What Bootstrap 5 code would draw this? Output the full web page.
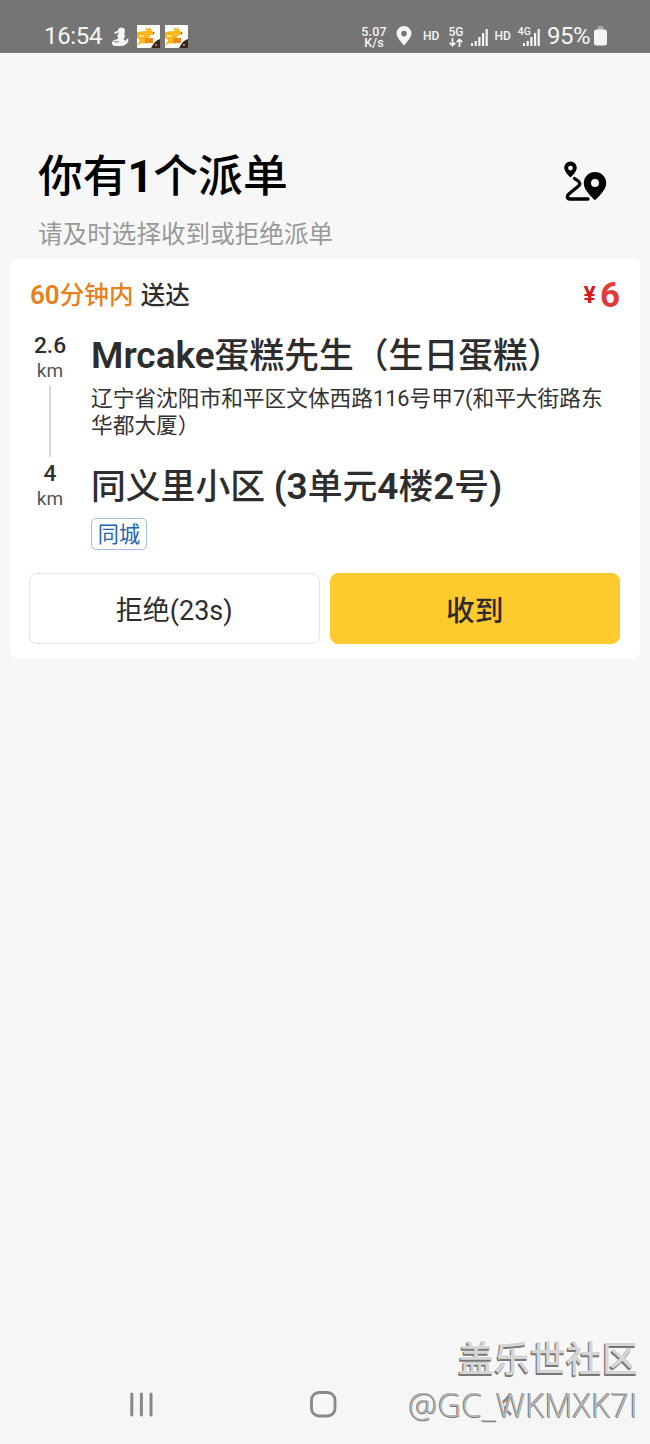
<!DOCTYPE html>
<html lang="zh-CN">
<head>
<meta charset="utf-8">
<meta name="viewport" content="width=device-width, initial-scale=1">
<title>派单</title>
<link href="https://cdn.jsdelivr.net/npm/bootstrap@5.3.0/dist/css/bootstrap.min.css" rel="stylesheet">
<style>
  body { background: #f7f7f7; color: #2d2d2d; font-family: Roboto, "Noto Sans CJK SC", sans-serif; overflow: hidden; }
  .screen { width: 650px; height: 1444px; }
  .status { height: 53px; background: #757575; color: #f5f5f5; padding: 20px 43px 0 44px; line-height: 32px; }
  .clock { font-size: 24px; letter-spacing: -.35px; width: 67px; }
  .speed { font-size: 12.5px; line-height: 11px; font-weight: 500; width: 26px; margin-top: 6px; white-space: pre-line; letter-spacing: .2px; }
  .tiny { font-size: 12px; font-weight: 500; }
  .pct { font-size: 24px; letter-spacing: -.5px; }
  .status svg { display: block; flex: none; }
  .heading { padding: 96px 43px 0 38px; height: 206px; }
  .title { font-size: 44.8px; line-height: 56px; font-weight: 500; color: #000; margin: 0; }
  .title b { font-weight: 700; }
  .hint { font-size: 24.6px; line-height: 30px; color: #999; margin: 15px 0 0; }
  .order { margin: 0 10px; height: 400px; border: 0; border-radius: 8px; padding: 18px 20px 15px; --bs-card-color: #2d2d2d; --bs-card-bg: #fff; }
  .eta { font-size: 24.6px; line-height: 34px; font-weight: 500; padding-top: 2px; height: 34px; }
  .eta span { color: #e8801c; margin-right: 1px; }
  .eta b { font-size: 26px; font-weight: 600; line-height: 1; }
  .yen { font-size: 23px; color: #d9171b; font-weight: 700; }
  .sum { font-size: 35px; color: #e13c3c; font-weight: 700; }
  .track { width: 42px; flex: none; margin-right: 20px; }
  .dist { font-size: 22.800px; line-height: 26px; font-weight: 500; }
  .unit { font-size: 19px; line-height: 24px; color: #555; }
  .rail { width: 2px; height: 71px; background: #d8d8d8; margin: 3px 0 4px; }
  .place { font-size: 34.800px; line-height: 46px; height: 46px; font-weight: 500; white-space: nowrap; margin: 0; }
  .place b { font-size: 37px; font-weight: 600; line-height: 1; }
  .addr { font-size: 21.700px; line-height: 26.500px; color: #333; white-space: nowrap; }
  .tagbox { font-size: 21.200px; line-height: 32px; width: 56px; height: 32px; border: 1.500px solid #a5bde0; border-radius: 5px; color: #2563b8; text-align: center; }
  .act { height: 71px; border-radius: 8px; font-size: 27px; line-height: 1; --bs-btn-color: #2d2d2d; padding: 5px 0 0; }
  .act-no { --bs-btn-border-color: #e5e5e5; --bs-btn-bg: #fff; }
  .act-yes { --bs-btn-bg: #ffca2e; --bs-btn-border-color: #ffca2e; font-size: 28.700px; font-weight: 500; }
  .navkeys { height: 73px; background: #f6f6f6; border-top: 1px solid #f3f3f3; }
  .navkeys svg { display: block; }
  .stamp { right: 12px; bottom: 14px; text-align: right; white-space: nowrap; color: #d6d6d6; text-shadow: 1px 1px 0 #777, -1px -1px 0 #fff; }
  .stamp-top { font: 500 36px/44px "Noto Sans CJK SC", sans-serif; margin-bottom: 2px; text-shadow: -1px 1px 0 #777, -1px 2px 0 #777, 1px -1px 0 #fff; }
  .stamp-user { font: 300 32.500px/50px "Open Sans", sans-serif; letter-spacing: .4px; color: #bbb; text-shadow: -1px 0 0 #777, 0 1px 0 #777, 1px -1px 0 #fff; }
</style>
</head>
<body>
<div class="screen position-relative d-flex flex-column">
  <header class="status d-flex align-items-start">
    <span class="clock">16:54</span>
    <svg width="19" height="22" viewBox="0 0 19 22" style="margin-top:6px" fill="#f5f5f5"><circle cx="10.500" cy="5" r="3.400"/><path d="M7.500 6.500 4 8 3 6.500 8 4zM8 7h5q2 3-.5 6l2 2 1.500-2.500 1.800 1.200-1.800 3.800q-3 3-8 2.500-7 .500-7-2.500 0-3.500 4-4 3-1 2-2.500L6 10z"/><path d="M3 15.500q4 1 5 0" fill="none" stroke="#757575"/></svg>
    <svg width="52" height="23" viewBox="0 0 52 23" style="margin:5px 0 0 7px">
      <defs><g id="roo"><path fill="#fff" d="M0 0h23v23H0z"/><path fill="#f9b81c" d="M0 7q6-1 10-1L8 2l4 2 1-2 2 4 2 1v2.500l-4 1-2 3v5H3l-2 2H0l3-5-3-3z"/><path fill="#fff" d="M2 10.500h5v1H2zM0 14l3 1-3 3z"/><path fill="#555" d="m16 7 2 1-2 1z"/><path fill="#f48a19" d="M8 13h8v5H8z"/><path fill="#3a251d" d="M14 23q4-8 9-9v9z"/><path fill="#a77" d="M18 19h2v2h-2z"/></g></defs>
      <use href="#roo"/><use href="#roo" x="28"/>
    </svg>
    <div class="speed text-center ms-auto">5.07
K/s</div>
    <svg width="16" height="20" viewBox="0 0 16 20" style="margin:6px 0 0 9px"><path fill="#f5f5f5" fill-rule="evenodd" d="M8 0a7.500 7.500 0 0 0-7.500 7.600C.5 12 8 19.500 8 19.500S15.500 12 15.500 7.600A7.500 7.500 0 0 0 8 0zm0 4.800a2.800 2.800 0 1 1 0 5.600 2.800 2.800 0 0 1 0-5.600z"/></svg>
    <span class="tiny" style="margin-left:11px">HD</span>
    <div class="tiny text-center" style="margin:6px 0 0 9px;line-height:12px"><div>5G</div>
      <svg class="mx-auto" width="14" height="9" viewBox="0 0 14 9" fill="none" stroke="#f5f5f5" stroke-width="1.700"><path d="M3.500 0v7.500M.7 4.800l2.800 2.800 2.800-2.800M10.500 9V1.500M7.700 4.200l2.800-2.800 2.800 2.800"/></svg></div>
    <svg width="17" height="17" viewBox="0 0 17 17" style="margin:9px 0 0 8px" fill="#f5f5f5"><path d="M0 14h2v3H0zM3.600 12h2.200v5H3.600zM7.300 8h2.200v9H7.300zM11 4h2.200v13H11zM14.600 0h2.200v17h-2.200z"/></svg>
    <span class="tiny" style="margin-left:6px">HD</span>
    <span class="tiny" style="margin:5px 0 0 7px;line-height:13px;font-size:10.500px">4G</span>
    <svg width="17" height="17" viewBox="0 0 17 17" style="margin:9px 0 0 -8px" fill="#f5f5f5"><path d="M0 14h2v3H0zM3.600 12h2.200v5H3.600zM7.300 8h2.200v9H7.300zM11 4h2.200v13H11zM14.600 0h2.200v17h-2.200z"/></svg>
    <span class="pct" style="margin-left:7px">95%</span>
    <svg width="13" height="20" viewBox="0 0 13 20" style="margin:6px 0 0 4px"><path fill="#aaa" d="M3.500 2q0-2 2-2h2q2 0 2 2v2h-6z"/><rect y="3.500" width="13" height="16" rx="2.500" fill="#f5f5f5"/></svg>
  </header>

  <section class="heading d-flex justify-content-between">
    <div>
      <h1 class="title">你有<b>1</b>个派单</h1>
      <p class="hint">请及时选择收到或拒绝派单</p>
    </div>
    <svg width="44" height="42" viewBox="0 0 44 42" style="margin-top:11px"><path fill-rule="evenodd" d="M7.500 1.500A6.300 6.300 0 0 0 1.200 7.800C1.200 12 7.500 17.500 7.500 17.500s6.300-5.500 6.300-9.700a6.300 6.300 0 0 0-6.300-6.300zm0 4.200a2.400 2.400 0 1 1 0 4.800 2.400 2.400 0 0 1 0-4.800zM32 12a11.200 11.200 0 0 0-11.200 11.200C20.800 31 32 40 32 40s11.200-9 11.200-16.800A11.200 11.200 0 0 0 32 12zm0 7a4 4 0 1 1 0 8 4 4 0 0 1 0-8z"/><path d="M11.500 18.500l3 2c3 2 3 4 .5 6l-8 6.500c-4 3-3 6 0 6H25" fill="none" stroke="#000" stroke-width="3.300" stroke-linecap="round"/></svg>
  </section>

  <main class="order card">
    <div class="d-flex justify-content-between">
      <div class="eta"><span><b>60</b>分钟内</span> 送达</div>
      <div class="d-flex align-items-center lh-1" style="height:36px;margin-bottom:-2px"><span class="yen">¥</span><span class="sum" style="margin-left:4px">6</span></div>
    </div>
    <div class="d-flex" style="margin-left:-1px">
      <div class="track d-flex flex-column align-items-center" style="padding-top:22px">
        <div class="dist">2.6</div><div class="unit">km</div>
        <div class="rail"></div>
        <div class="dist">4</div><div class="unit">km</div>
      </div>
      <div style="padding-top:22px">
        <h2 class="place"><b>Mrcake</b>蛋糕先生（生日蛋糕）</h2>
        <div class="addr" style="margin-top:7px">辽宁省沈阳市和平区文体西路116号甲7(和平大街路东<br>华都大厦）</div>
        <h2 class="place" style="margin-top:25px">同义里小区 <b>(3</b>单元<b>4</b>楼<b>2</b>号<b>)</b></h2>
        <div class="tagbox" style="margin-top:8px">同城</div>
      </div>
    </div>
    <div class="d-flex mt-auto" style="gap:10px;margin-left:-1px">
      <button class="act act-no btn flex-fill w-50">拒绝(23s)</button>
      <button class="act act-yes btn flex-fill w-50">收到</button>
    </div>
  </main>

  <footer class="navkeys mt-auto">
    <div class="d-flex align-items-center" style="padding:19px 0 0 130px">
      <svg width="23" height="25" viewBox="0 0 23 25" stroke="#888" stroke-width="3" stroke-linecap="round"><path d="M1.800 2v21M11.400 2v21M21 2v21"/></svg>
      <svg width="27" height="27" viewBox="0 0 27 27" style="margin-left:157px"><rect x="1.500" y="1.500" width="23.500" height="23.500" rx="7.500" fill="none" stroke="#888" stroke-width="2.800"/></svg>
      <svg width="15" height="25" viewBox="0 0 15 25" style="margin-left:161px"><path d="M13 2 3 12.500 13 23" fill="none" stroke="#888" stroke-width="2.800"/></svg>
    </div>
  </footer>
  <div class="stamp position-absolute">
    <div class="stamp-top">盖乐世社区</div>
    <div class="stamp-user">@GC_WKMXK7I</div>
  </div>
</div>
<script src="https://cdn.jsdelivr.net/npm/bootstrap@5.3.0/dist/js/bootstrap.bundle.min.js"></script>
</body>
</html>
